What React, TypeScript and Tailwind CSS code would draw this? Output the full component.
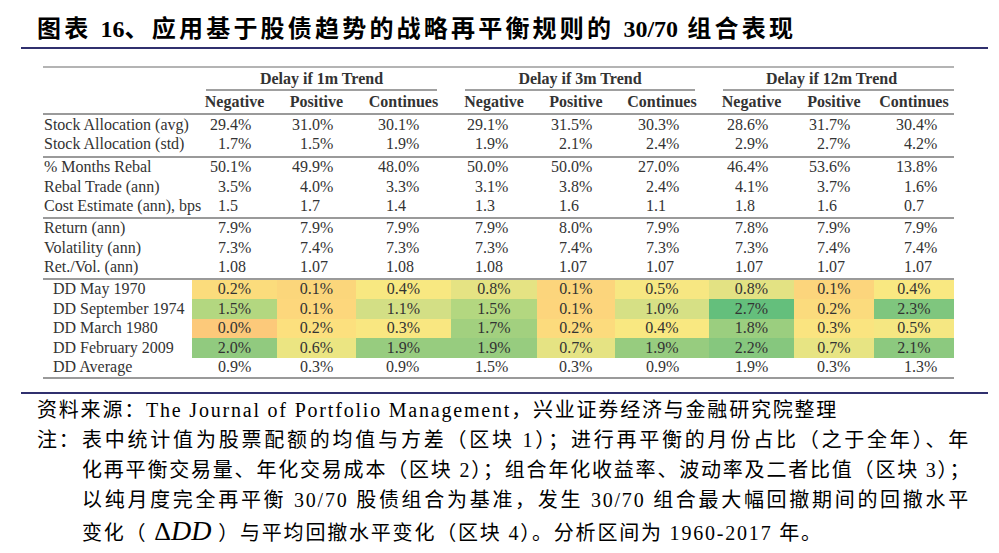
const cols = [
  { w: "w-[85px]", pl: "pl-[18px]" },
  { w: "w-[79px]", pl: "pl-[15px]" },
  { w: "w-[95px]", pl: "pl-[22px]" },
  { w: "w-[86px]", pl: "pl-[16px]" },
  { w: "w-[78px]", pl: "pl-[14px]" },
  { w: "w-[94px]", pl: "pl-[23px]" },
  { w: "w-[85px]", pl: "pl-[18px]" },
  { w: "w-[80px]", pl: "pl-[15px]" },
  { w: "w-[80px]", pl: "pl-[22px]" },
];

const groups = [
  { title: "Delay if 1m Trend", w: "w-[259px]", line: "mx-[14px]" },
  { title: "Delay if 3m Trend", w: "w-[258px]", line: "mx-[14px]" },
  { title: "Delay if 12m Trend", w: "w-[245px]", line: "ml-[14px]" },
];

const subHeads = ["Negative", "Positive", "Continues"];

const blocks: [string, string][][] = [
  [
    ["Stock Allocation (avg)", "29.4% 31.0% 30.1% 29.1% 31.5% 30.3% 28.6% 31.7% 30.4%"],
    ["Stock Allocation (std)", "1.7% 1.5% 1.9% 1.9% 2.1% 2.4% 2.9% 2.7% 4.2%"],
  ],
  [
    ["% Months Rebal", "50.1% 49.9% 48.0% 50.0% 50.0% 27.0% 46.4% 53.6% 13.8%"],
    ["Rebal Trade (ann)", "3.5% 4.0% 3.3% 3.1% 3.8% 2.4% 4.1% 3.7% 1.6%"],
    ["Cost Estimate (ann), bps", "1.5 1.7 1.4 1.3 1.6 1.1 1.8 1.6 0.7"],
  ],
  [
    ["Return (ann)", "7.9% 7.9% 7.9% 7.9% 8.0% 7.9% 7.8% 7.9% 7.9%"],
    ["Volatility (ann)", "7.3% 7.4% 7.3% 7.3% 7.4% 7.3% 7.3% 7.4% 7.4%"],
    ["Ret./Vol. (ann)", "1.08 1.07 1.08 1.08 1.07 1.07 1.07 1.07 1.07"],
  ],
];

// drawdown heat map, colours read off the screenshot
const heat: { label: string; vals: string; bg: string[] }[] = [
  {
    label: "DD May 1970",
    vals: "0.2% 0.1% 0.4% 0.8% 0.1% 0.5% 0.8% 0.1% 0.4%",
    bg: ["bg-[#fbdc7c]", "bg-[#fbd67b]", "bg-[#f8e881]", "bg-[#e5e383]", "bg-[#fcd57c]", "bg-[#f7e782]", "bg-[#e3e283]", "bg-[#fcd57c]", "bg-[#f9e881]"],
  },
  {
    label: "DD September 1974",
    vals: "1.5% 0.1% 1.1% 1.5% 0.1% 1.0% 2.7% 0.2% 2.3%",
    bg: ["bg-[#b3d780]", "bg-[#fdd77c]", "bg-[#d3df85]", "bg-[#b3d780]", "bg-[#fdd57c]", "bg-[#d6e085]", "bg-[#64bf7c]", "bg-[#fbdb7d]", "bg-[#7fc67e]"],
  },
  {
    label: "DD March 1980",
    vals: "0.0% 0.2% 0.3% 1.7% 0.2% 0.4% 1.8% 0.3% 0.5%",
    bg: ["bg-[#fcc97a]", "bg-[#fce07e]", "bg-[#f9e781]", "bg-[#a2d07f]", "bg-[#fcdb7d]", "bg-[#f9e881]", "bg-[#9bce7f]", "bg-[#fae480]", "bg-[#f5e782]"],
  },
  {
    label: "DD February 2009",
    vals: "2.0% 0.6% 1.9% 1.9% 0.7% 1.9% 2.2% 0.7% 2.1%",
    bg: ["bg-[#91ca7f]", "bg-[#ebe582]", "bg-[#97cc7f]", "bg-[#97cc7f]", "bg-[#e5e383]", "bg-[#97cc7f]", "bg-[#86c77e]", "bg-[#e7e483]", "bg-[#8cc97f]"],
  },
];

const avg = "0.9% 0.3% 0.9% 1.5% 0.3% 0.9% 1.9% 0.3% 1.3%";

function Num({ v }: { v: string }) {
  // keep the decimal points lined up
  const short = /^\d\./.test(v);
  return (
    <span>
      {short && <span className="invisible">0</span>}
      {v}
    </span>
  );
}

function DataRow({ label, vals, indent = false }: { label: string; vals: string; indent?: boolean }) {
  return (
    <div className="flex h-[19.5px] items-center">
      <div className={`w-[149px] shrink-0 whitespace-nowrap ${indent ? "pl-[10px]" : "pl-[1px]"}`}>{label}</div>
      {vals.split(" ").map((v, i) => (
        <div key={i} className={`${cols[i].w} ${cols[i].pl} shrink-0 whitespace-nowrap`}>
          <Num v={v} />
        </div>
      ))}
    </div>
  );
}

function Rule() {
  return <div className="h-[2px] bg-[#9a9a9a]" />;
}

export default function App() {
  return (
    <div className="w-[999px] h-[553px] bg-white overflow-hidden font-['Liberation_Serif','Noto_Sans_CJK_SC',serif] text-black">
      <div className="h-[47px] pt-[14px] pl-[37px] leading-[30px] text-[24px] font-bold tracking-[3.2px] whitespace-nowrap">
        图表 <span className="tracking-normal">16</span>、应用基于股债趋势的战略再平衡规则的 <span className="tracking-normal">30/70</span> 组合表现
      </div>
      <div className="ml-[21px] w-[967px] h-[2px] bg-[#30306e]" />

      <div className="ml-[43px] mt-[17px] w-[911px] text-[16px] text-[#333] font-['Liberation_Serif',serif]">
        <div className="h-[2px] bg-[#b4b4b4]" />
        <div className="flex">
          <div className="w-[149px] shrink-0" />
          {groups.map((g) => (
            <div key={g.title} className={`${g.w} shrink-0 flex flex-col`}>
              <div className="h-[21px] leading-[21px] text-center font-bold">{g.title}</div>
              <div className={`h-[2px] bg-[#a0a0a0] ${g.line}`} />
            </div>
          ))}
        </div>
        <div className="flex h-[22px] items-center">
          <div className="w-[149px] shrink-0" />
          {cols.map((c, i) => (
            <div key={i} className={`${c.w} shrink-0 text-center font-bold`}>
              {subHeads[i % 3]}
            </div>
          ))}
        </div>
        <Rule />
        {blocks.map((b, bi) => (
          <div key={bi}>
            <div className={bi === 0 ? "pb-[1.5px]" : "pb-[0.5px]"}>
              {b.map(([l, v]) => (
                <DataRow key={l} label={l} vals={v} />
              ))}
            </div>
            <Rule />
          </div>
        ))}
        {heat.map((r) => (
          <div key={r.label} className="flex h-[19.5px] items-center">
            <div className="w-[149px] shrink-0 pl-[10px] whitespace-nowrap">{r.label}</div>
            {r.vals.split(" ").map((v, i) => (
              <div key={i} className={`${cols[i].w} ${r.bg[i]} shrink-0 h-full flex items-center justify-center`}>
                {v}
              </div>
            ))}
          </div>
        ))}
        <div className="flex h-[19px] items-center">
          <div className="w-[149px] shrink-0 pl-[10px]">DD Average</div>
          {avg.split(" ").map((v, i) => (
            <div key={i} className={`${cols[i].w} ${cols[i].pl} shrink-0`}>
              <Num v={v} />
            </div>
          ))}
        </div>
        <Rule />
      </div>

      <div className="ml-[21px] mt-[13px] w-[967px] h-[2px] bg-[#30306e]" />

      <div className="pl-[37px] pt-[1px] text-[20px] leading-[30px] tracking-[1.8px] whitespace-nowrap">
        <div>资料来源：The Journal of Portfolio Management，兴业证券经济与金融研究院整理</div>
        <div className="flex">
          <div className="w-[45px] shrink-0">注：</div>
          <div className="w-[888px]">
            <div className="text-justify [text-align-last:justify]">表中统计值为股票配额的均值与方差（区块 1）；进行再平衡的月份占比（之于全年）、年</div>
            <div className="text-justify [text-align-last:justify]">化再平衡交易量、年化交易成本（区块 2）；组合年化收益率、波动率及二者比值（区块 3）；</div>
            <div className="text-justify [text-align-last:justify]">以纯月度完全再平衡 30/70 股债组合为基准，发生 30/70 组合最大幅回撤期间的回撤水平</div>
            <div className="h-[32px] leading-[32px]">
              变化（ <span className="text-[26px] tracking-normal">Δ</span>
              <span className="text-[28px] italic tracking-normal">DD</span> ）与平均回撤水平变化（区块 4）。分析区间为 1960-2017 年。
            </div>
          </div>
        </div>
      </div>
    </div>
  );
}
